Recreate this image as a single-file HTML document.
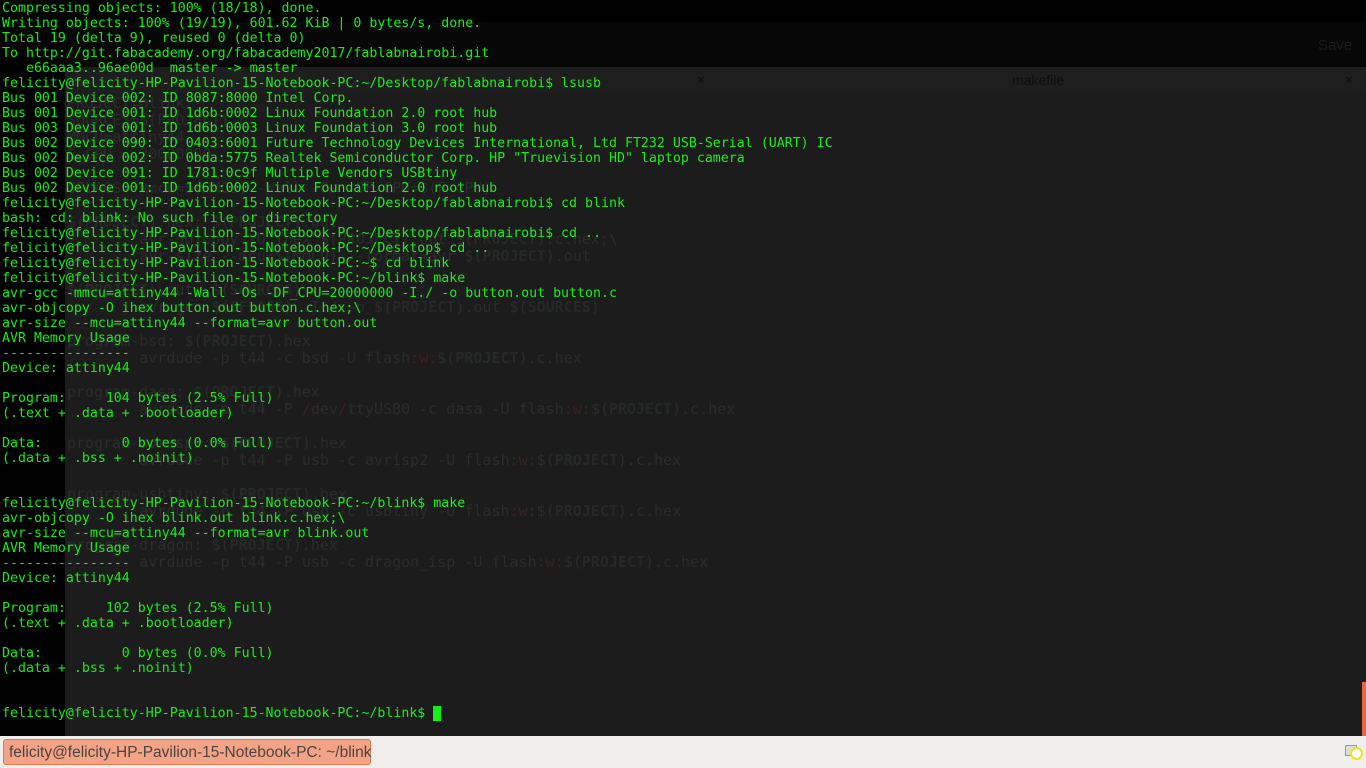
<!DOCTYPE html>
<html><head><meta charset="utf-8"><style>
html,body{margin:0;padding:0;width:1366px;height:768px;overflow:hidden;background:#000;}
.abs{position:absolute;}
#hdr{left:65px;top:22px;width:1301px;height:45px;background:#070707;}
#tabs{left:65px;top:67px;width:1301px;height:26px;background:#1e1e1e;}
#ed{left:65px;top:93px;width:1301px;height:643px;background:#1c1c1c;}
.ed{font-family:"DejaVu Sans Mono","Liberation Mono",monospace;font-size:15px;color:#2c2c2c;white-space:pre;line-height:17px;}
.ed b{color:#262a26;}
.ed i{font-style:normal;color:#3a2222;}
#term{left:2px;top:1px;font-family:"DejaVu Sans Mono","Liberation Mono",monospace;font-size:13.27px;line-height:15px;color:#17ee17;white-space:pre;}
#panel{left:0;top:736px;width:1366px;height:32px;background:#f0efed;}
#btn{left:3px;top:739px;width:368px;height:26px;background:#f5a386;border:1px solid #e07a50;border-radius:3px;font-family:"Liberation Sans",sans-serif;font-size:15.5px;color:#4a4440;line-height:25px;padding-left:5px;box-sizing:border-box;white-space:nowrap;}
</style></head><body>
<div class="abs" id="hdr"></div>
<div class="abs" style="left:1318px;top:37px;font-family:'Liberation Sans',sans-serif;font-size:15px;color:#1c1c1c;">Save</div>
<div class="abs" id="tabs"></div>
<div class="abs" style="left:1012px;top:72px;font-family:'Liberation Sans',sans-serif;font-size:14px;color:#0e0e0e;">makefile</div>
<div class="abs" style="left:697px;top:72px;font-family:'Liberation Sans',sans-serif;font-size:13px;color:#0e0e0e;">×</div>
<div class="abs" style="left:1345px;top:72px;font-family:'Liberation Sans',sans-serif;font-size:13px;color:#0e0e0e;">×</div>
<div class="abs" id="ed"></div>
<div class="abs ed" style="left:67px;top:95px;">PROJECT=blink
SOURCES=$(PROJECT).c
MMCU=attiny44
F_CPU = 20000000

CFLAGS=-mmcu=$(MMCU) -Wall -Os -DF_CPU=$(F_CPU)

$(<b>PROJECT</b>).hex: $(<b>PROJECT</b>).out
	avr-objcopy -O ihex $(<b>PROJECT</b>).out $(<b>PROJECT</b>).c.hex;\
	avr-size --mcu=$(MMCU) --format=avr $(<b>PROJECT</b>).out

$(<b>PROJECT</b>).out: $(<b>SOURCES</b>)
	avr-gcc $(<b>CFLAGS</b>) -I./ -o $(<b>PROJECT</b>).out $(<b>SOURCES</b>)

program-bsd: $(<b>PROJECT</b>).hex
	avrdude -p t44 -c bsd -U flash<i>:w:</i>$(<b>PROJECT</b>).c.hex

program-dasa: $(<b>PROJECT</b>).hex
	avrdude -p t44 -P <i>/</i>dev<i>/</i>ttyUSB0 -c dasa -U flash<i>:w:</i>$(<b>PROJECT</b>).c.hex

program-avrisp2: $(<b>PROJECT</b>).hex
	avrdude -p t44 -P usb -c avrisp2 -U flash<i>:w:</i>$(<b>PROJECT</b>).c.hex

program-usbtiny: $(<b>PROJECT</b>).hex
	avrdude -p t44 -P usb -c usbtiny -U flash<i>:w:</i>$(<b>PROJECT</b>).c.hex

program-dragon: $(<b>PROJECT</b>).hex
	avrdude -p t44 -P usb -c dragon_isp -U flash<i>:w:</i>$(<b>PROJECT</b>).c.hex</div>
<div class="abs" style="left:1362px;top:682px;width:4px;height:54px;background:#e8673a;"></div>
<div class="abs" id="term">Compressing objects: 100% (18/18), done.
Writing objects: 100% (19/19), 601.62 KiB | 0 bytes/s, done.
Total 19 (delta 9), reused 0 (delta 0)
To http://git.fabacademy.org/fabacademy2017/fablabnairobi.git
   e66aaa3..96ae00d  master -&gt; master
felicity@felicity-HP-Pavilion-15-Notebook-PC:~/Desktop/fablabnairobi$ lsusb
Bus 001 Device 002: ID 8087:8000 Intel Corp.
Bus 001 Device 001: ID 1d6b:0002 Linux Foundation 2.0 root hub
Bus 003 Device 001: ID 1d6b:0003 Linux Foundation 3.0 root hub
Bus 002 Device 090: ID 0403:6001 Future Technology Devices International, Ltd FT232 USB-Serial (UART) IC
Bus 002 Device 002: ID 0bda:5775 Realtek Semiconductor Corp. HP "Truevision HD" laptop camera
Bus 002 Device 091: ID 1781:0c9f Multiple Vendors USBtiny
Bus 002 Device 001: ID 1d6b:0002 Linux Foundation 2.0 root hub
felicity@felicity-HP-Pavilion-15-Notebook-PC:~/Desktop/fablabnairobi$ cd blink
bash: cd: blink: No such file or directory
felicity@felicity-HP-Pavilion-15-Notebook-PC:~/Desktop/fablabnairobi$ cd ..
felicity@felicity-HP-Pavilion-15-Notebook-PC:~/Desktop$ cd ..
felicity@felicity-HP-Pavilion-15-Notebook-PC:~$ cd blink
felicity@felicity-HP-Pavilion-15-Notebook-PC:~/blink$ make
avr-gcc -mmcu=attiny44 -Wall -Os -DF_CPU=20000000 -I./ -o button.out button.c
avr-objcopy -O ihex button.out button.c.hex;\
avr-size --mcu=attiny44 --format=avr button.out
AVR Memory Usage
----------------
Device: attiny44

Program:     104 bytes (2.5% Full)
(.text + .data + .bootloader)

Data:          0 bytes (0.0% Full)
(.data + .bss + .noinit)


felicity@felicity-HP-Pavilion-15-Notebook-PC:~/blink$ make
avr-objcopy -O ihex blink.out blink.c.hex;\
avr-size --mcu=attiny44 --format=avr blink.out
AVR Memory Usage
----------------
Device: attiny44

Program:     102 bytes (2.5% Full)
(.text + .data + .bootloader)

Data:          0 bytes (0.0% Full)
(.data + .bss + .noinit)


felicity@felicity-HP-Pavilion-15-Notebook-PC:~/blink$ </div>
<div class="abs" style="left:433px;top:706px;width:8px;height:15px;background:#17ee17;"></div>
<div class="abs" id="panel"></div>
<div class="abs" id="btn">felicity@felicity-HP-Pavilion-15-Notebook-PC: ~/blink</div>
<div class="abs" style="left:1345px;top:745px;width:10px;height:9px;border:1px solid #999;background:#ddd;"></div>
<div class="abs" style="left:1350px;top:747px;width:9px;height:9px;border-radius:50%;background:#fff;border:2px solid #e8e820;"></div>
</body></html>
